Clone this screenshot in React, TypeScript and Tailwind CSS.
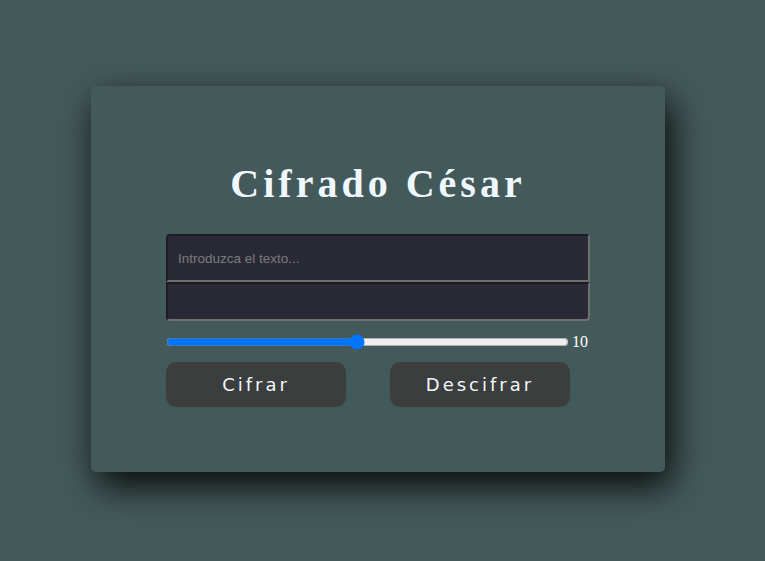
import React, { useState } from "react";

export default function App() {
  const [shift, setShift] = useState(10);
  return (
    <div className="w-[765px] h-[561px] bg-[#445a5a] overflow-hidden">
      <div className="pt-[86px] pl-[91px]">
        <div className="w-[574px] h-[386px] bg-[#445a5a] rounded-[5px] shadow-[6px_14px_36px_rgba(0,0,0,0.9)] px-[75px] pt-[75px]">
          <h1 className="text-center text-[40px] leading-[46px] font-bold tracking-[4px] text-[#f0f8ff] font-['Liberation_Serif',serif]">
            Cifrado César
          </h1>
          <div className="mt-[27px] flex flex-col">
            <input
              type="text"
              placeholder="Introduzca el texto..."
              className="h-[48px] w-full bg-[#292a36] border-2 border-t-[#1c1d22] border-l-[#1c1d22] border-r-[#6f6f6f] border-b-[#6f6f6f] rounded-t-[4px] pl-[10px] text-[13.5px] text-white placeholder:text-[#7a7a7e] outline-none font-['Liberation_Sans',Arial,sans-serif]"
            />
            <textarea
              readOnly
              className="h-[39px] w-full bg-[#292a36] border-2 border-t-[#1c1d22] border-l-[#1c1d22] border-r-[#6f6f6f] border-b-[#6f6f6f] rounded-b-[4px] resize-none outline-none"
            />
          </div>
          <div className="mt-[12px] flex items-center h-[18px]">
            <input
              type="range"
              min={1}
              max={20}
              value={shift}
              onChange={(e) => setShift(Number(e.target.value))}
              className="w-[403px] m-0 accent-[#0075ff]"
            />
            <span className="ml-[3px] text-[16px] leading-[18px] text-white font-['Liberation_Serif',serif]">
              {shift}
            </span>
          </div>
          <div className="mt-[11px] flex gap-[44px]">
            <button className="w-[180px] h-[45px] rounded-[10px] bg-[#3c3d3d] text-[#f0f8ff] text-[18px] tracking-[3px] font-['DejaVu_Sans',sans-serif]">
              Cifrar
            </button>
            <button className="w-[180px] h-[45px] rounded-[10px] bg-[#3c3d3d] text-[#f0f8ff] text-[18px] tracking-[3px] font-['DejaVu_Sans',sans-serif]">
              Descifrar
            </button>
          </div>
        </div>
      </div>
    </div>
  );
}
